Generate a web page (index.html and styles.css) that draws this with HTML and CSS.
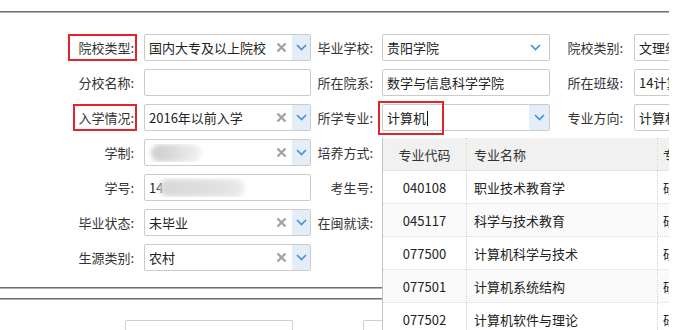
FILE: index.html
```html
<!DOCTYPE html>
<html lang="zh-CN">
<head>
    <meta charset="UTF-8">
    <title>学籍信息</title>
    <link rel="stylesheet" href="styles.css">
</head>
<body>
    <div class="screen">
        <div class="rule"></div>

        <div class="form">
            <div class="row">
                <label class="lbl c1"><span class="mark">院校类型:</span></label>
                <div class="field w1"><span class="val">国内大专及以上院校</span><span class="clear"><svg width="11" height="11" viewBox="0 0 11 11"><path d="M1.5 1.5 L9.5 9.5 M9.5 1.5 L1.5 9.5"/></svg></span><span class="arrow"><svg width="11" height="7" viewBox="0 0 11 7"><polyline points="1,1 5.5,5.5 10,1"/></svg></span></div>
                <label class="lbl c2">毕业学校:</label>
                <div class="field w2"><span class="val">贵阳学院</span><span class="arrow plain"><svg width="11" height="7" viewBox="0 0 11 7"><polyline points="1,1 5.5,5.5 10,1"/></svg></span></div>
                <label class="lbl c3">院校类别:</label>
                <div class="field w3"><span class="val">文理综合</span></div>
            </div>

            <div class="row">
                <label class="lbl c1">分校名称:</label>
                <div class="field w1"><span class="val"></span></div>
                <label class="lbl c2">所在院系:</label>
                <div class="field w2"><span class="val">数学与信息科学学院</span></div>
                <label class="lbl c3">所在班级:</label>
                <div class="field w3"><span class="val">14计算机</span></div>
            </div>

            <div class="row">
                <label class="lbl c1"><span class="mark narrow">入学情况:</span></label>
                <div class="field w1"><span class="val">2016年以前入学</span><span class="clear"><svg width="11" height="11" viewBox="0 0 11 11"><path d="M1.5 1.5 L9.5 9.5 M9.5 1.5 L1.5 9.5"/></svg></span><span class="arrow"><svg width="11" height="7" viewBox="0 0 11 7"><polyline points="1,1 5.5,5.5 10,1"/></svg></span></div>
                <label class="lbl c2">所学专业:</label>
                <div class="field w2 focus"><span class="val"><span class="mark typed">计算机<i class="caret"></i></span></span><span class="arrow"><svg width="11" height="7" viewBox="0 0 11 7"><polyline points="1,1 5.5,5.5 10,1"/></svg></span></div>
                <label class="lbl c3">专业方向:</label>
                <div class="field w3"><span class="val">计算机科学与技术</span></div>
            </div>

            <div class="row">
                <label class="lbl c1">学制:</label>
                <div class="field w1"><span class="val"><span class="smudge s1"></span></span><span class="clear"><svg width="11" height="11" viewBox="0 0 11 11"><path d="M1.5 1.5 L9.5 9.5 M9.5 1.5 L1.5 9.5"/></svg></span><span class="arrow"><svg width="11" height="7" viewBox="0 0 11 7"><polyline points="1,1 5.5,5.5 10,1"/></svg></span></div>
                <label class="lbl c2">培养方式:</label>
                <div class="field w2"><span class="val"></span></div>
            </div>

            <div class="row">
                <label class="lbl c1">学号:</label>
                <div class="field w1"><span class="val">14<span class="smudge s2"></span></span></div>
                <label class="lbl c2">考生号:</label>
                <div class="field w2"><span class="val"></span></div>
            </div>

            <div class="row">
                <label class="lbl c1">毕业状态:</label>
                <div class="field w1"><span class="val">未毕业</span><span class="clear"><svg width="11" height="11" viewBox="0 0 11 11"><path d="M1.5 1.5 L9.5 9.5 M9.5 1.5 L1.5 9.5"/></svg></span><span class="arrow"><svg width="11" height="7" viewBox="0 0 11 7"><polyline points="1,1 5.5,5.5 10,1"/></svg></span></div>
                <label class="lbl c2">在闽就读:</label>
                <div class="field w2"><span class="val"></span></div>
            </div>

            <div class="row">
                <label class="lbl c1">生源类别:</label>
                <div class="field w1"><span class="val">农村</span><span class="clear"><svg width="11" height="11" viewBox="0 0 11 11"><path d="M1.5 1.5 L9.5 9.5 M9.5 1.5 L1.5 9.5"/></svg></span><span class="arrow"><svg width="11" height="7" viewBox="0 0 11 7"><polyline points="1,1 5.5,5.5 10,1"/></svg></span></div>
            </div>
        </div>

        <div class="rule low"></div>
        <div class="rule second"></div>

        <div class="foot">
            <div class="box b1"></div>
            <div class="box b2"></div>
        </div>

        <!-- combo dropdown for 所学专业 -->
        <div class="dropdown">
            <table>
                <thead>
                    <tr><th class="code">专业代码</th><th class="name">专业名称</th><th class="level">专业层次</th></tr>
                </thead>
                <tbody>
                    <tr><td class="code">040108</td><td class="name">职业技术教育学</td><td class="level">研究生</td></tr>
                    <tr><td class="code">045117</td><td class="name">科学与技术教育</td><td class="level">研究生</td></tr>
                    <tr><td class="code">077500</td><td class="name">计算机科学与技术</td><td class="level">研究生</td></tr>
                    <tr><td class="code">077501</td><td class="name">计算机系统结构</td><td class="level">研究生</td></tr>
                    <tr><td class="code">077502</td><td class="name">计算机软件与理论</td><td class="level">研究生</td></tr>
                </tbody>
            </table>
        </div>
    </div>
</body>
</html>
```

FILE: styles.css
```css
body, html {
    margin: 0;
    padding: 0;
    background: #fff;
    font-family: "Noto Sans CJK SC", "Microsoft YaHei", sans-serif;
    font-size: 13px;
    color: #333;
}
.screen {
    position: relative;
    width: 669px;
    height: 330px;
    overflow: hidden;
    padding-top: 11px;
    box-sizing: border-box;
}
.rule {
    height: 0;
    border-top: 1px solid #707070;
    border-bottom: 1px solid #b0b0b0;
}
.rule.low { margin-top: 16px; }
.rule.second { margin-top: 9px; }

.form {
    margin-top: 21px;
    display: flex;
    flex-direction: column;
    gap: 8px;
}
.row {
    display: flex;
    height: 27px;
    align-items: center;
}
.lbl {
    box-sizing: border-box;
    text-align: right;
    white-space: nowrap;
    flex: none;
    line-height: 27px;
}
.c1 { width: 144px; padding-right: 10px; }
.c2 { width: 71px; padding-right: 9px; }
.c3 { width: 84px; padding-right: 11px; }

.mark {
    display: inline-block;
    border: 2px solid #e3242b;
    line-height: 23px;
    padding: 0 1px 0 8px;
    margin-right: -3px;
}
.mark.narrow { padding-left: 3px; }

.field {
    box-sizing: border-box;
    height: 27px;
    border: 1px solid #cbcbcb;
    border-radius: 2px;
    background: #fff;
    display: flex;
    align-items: center;
    flex: none;
    color: #222;
}
.w1 { width: 167px; }
.w2 { width: 168px; }
.w3 { width: 80px; }
.val {
    flex: 1;
    padding-left: 4px;
    white-space: nowrap;
    overflow: hidden;
    display: flex;
    align-items: center;
}
.field.focus .val { overflow: visible; }
.clear {
    width: 12px;
    margin-right: 4px;
    display: flex;
    align-items: center;
}
.clear svg path {
    stroke: #a3a3a3;
    stroke-width: 2.4;
    fill: none;
}
.arrow {
    width: 18px;
    height: 25px;
    background: #e4eef9;
    display: flex;
    align-items: center;
    justify-content: center;
}
.arrow.plain { background: none; margin-right: 5px; }
.field.focus .arrow { width: 20px; }
.arrow svg polyline {
    stroke: #4b90d4;
    stroke-width: 1.7;
    fill: none;
}

/* the typed value sits in a red annotation box that spills over the input */
.mark.typed {
    margin: 5px 0 0 -9px;
    padding: 0 14px 0 7px;
    line-height: 30px;
    display: inline-flex;
    align-items: center;
    color: #222;
    position: relative;
    top: -2px;
}
.caret {
    display: inline-block;
    width: 0;
    height: 15px;
    border-left: 1px solid #111;
    margin-left: 1px;
}

.smudge {
    display: inline-block;
    height: 18px;
    border-radius: 9px;
    filter: blur(2.5px);
}
.smudge.s1 {
    width: 50px;
    margin-left: 2px;
    background: linear-gradient(90deg, #cfcfcf 0, #d6d6d6 35%, #e6e6e6 70%, #f0f0f0 100%);
}
.smudge.s2 {
    width: 86px;
    margin-left: -4px;
    background: linear-gradient(90deg, #d8d8d8 0, #dedede 50%, #e4e4e4 80%, #ececec 100%);
}

.foot {
    display: flex;
    margin-top: 20px;
}
.box {
    height: 20px;
    border: 1px solid #cfcfcf;
    border-bottom: none;
    border-radius: 2px 2px 0 0;
}
.b1 { margin-left: 125px; width: 166px; }
.b2 { margin-left: 70px; width: 40px; }

.dropdown {
    position: absolute;
    left: 382px;
    top: 138px;
    right: 0;
    bottom: 0;
    background: #fff;
    border-left: 1px solid #c4c4c4;
    overflow: hidden;
}
.dropdown table {
    border-collapse: collapse;
    width: 300px;
    table-layout: fixed;
}
.dropdown th,
.dropdown td {
    white-space: nowrap;
    overflow: hidden;
    font-weight: normal;
    border-right: 1px dotted #cfcfcf;
    padding: 0;
}
.dropdown th {
    height: 32px;
    background: #f1f1f1;
    color: #333;
    border-bottom: 1px solid #e4e4e4;
}
.dropdown td {
    height: 32px;
    border-bottom: 1px dotted #d8d8d8;
    color: #222;
}
.dropdown tbody tr:nth-child(even) td { background: #fafafa; }
.code { width: 83px; text-align: center; }
.name { width: 183px; text-align: left; padding-left: 7px !important; }
.level { text-align: left; padding-left: 5px !important; }
```
